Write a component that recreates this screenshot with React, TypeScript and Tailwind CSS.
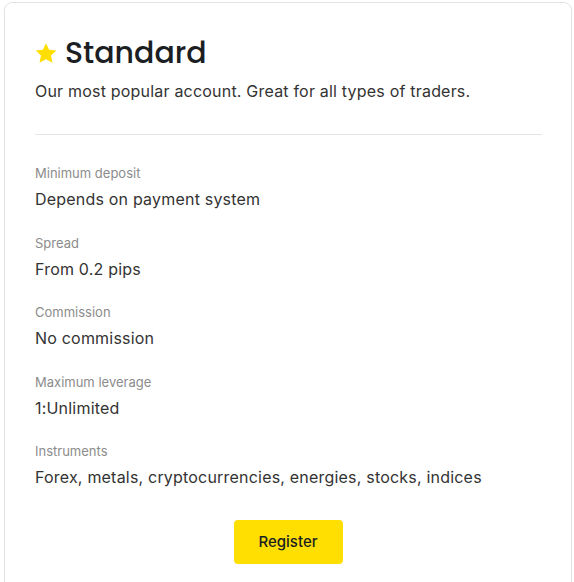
const rows = [
  { label: "Minimum deposit", value: "Depends on payment system" },
  { label: "Spread", value: "From 0.2 pips" },
  { label: "Commission", value: "No commission" },
  { label: "Maximum leverage", value: "1:Unlimited" },
  { label: "Instruments", value: "Forex, metals, cryptocurrencies, energies, stocks, indices" },
];

const Star = () => (
  <svg width="22" height="21" viewBox="0 0 24 23" className="shrink-0">
    <path
      d="M12 0.3l3.4 7.1 7.9 0.9-5.8 5.4 1.6 7.9L12 17.8l-7.1 3.8 1.6-7.9L0.7 8.3l7.9-0.9z"
      fill="#ffde02"
    />
  </svg>
);

export default function App() {
  return (
    <div className="min-h-screen bg-white pl-[4px] pt-[2px] font-['Inter',sans-serif]">
      <div className="w-[568px] h-[620px] rounded-[8px] border border-[#e3e3e3] bg-white px-[30px] pt-[30px]">
        <div className="flex items-center gap-[8px]">
          <Star />
          <h1 className="text-[30px] leading-[40px] font-medium text-[#1b1e22] font-['Poppins','Open_Sans',sans-serif]">
            Standard
          </h1>
        </div>
        <p className="mt-[6px] text-[16px] leading-[24px] tracking-[0.2px] text-[#333]">
          Our most popular account. Great for all types of traders.
        </p>
        <div className="mt-[31px] mr-[-1px] border-t border-[#e5e5e5]" />

        <div className="mt-[29px] flex flex-col gap-[22.5px]">
          {rows.map((r) => (
            <div key={r.label}>
              <div className="text-[13px] leading-[18px] text-[#8c8c8c]">{r.label}</div>
              <div className="mt-[5px] text-[16px] leading-[24px] tracking-[0.2px] text-[#333]">{r.value}</div>
            </div>
          ))}
        </div>

        <div className="mt-[31px] flex justify-center">
          <button className="h-[44px] w-[109px] rounded-[4px] bg-[#ffde02] text-[15px] font-medium text-[#1b1e22]">
            Register
          </button>
        </div>
      </div>
    </div>
  );
}
